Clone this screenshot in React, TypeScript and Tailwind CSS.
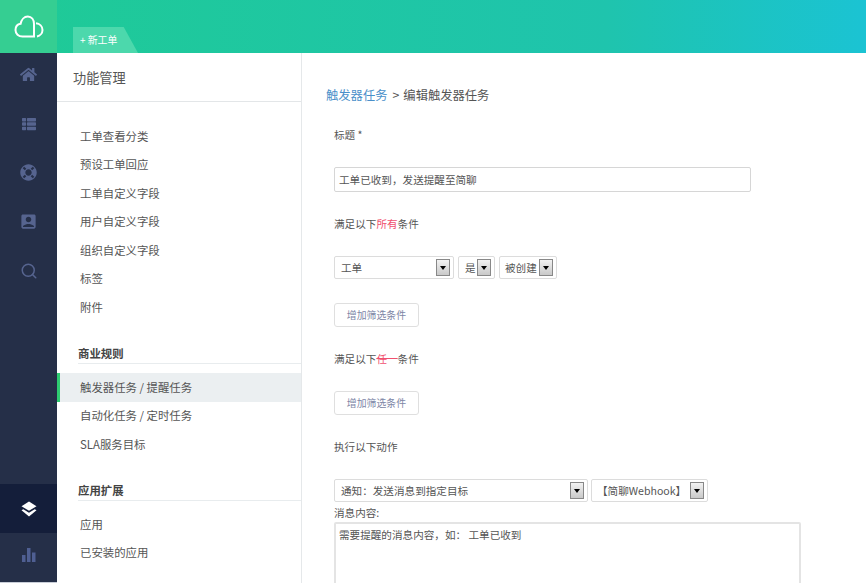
import React from "react";
import { FaHome, FaThList, FaLifeRing } from "react-icons/fa";
import { MdAccountBox } from "react-icons/md";
import { FiSearch } from "react-icons/fi";

const font = { fontFamily: '"Noto Sans CJK SC", "Liberation Sans", sans-serif' };

function Logo() {
  return (
    <svg width="30" height="24" viewBox="0 0 30 24" fill="none" stroke="white" strokeWidth="2">
      <path d="M20 21.5H8.5C4.5 21.5 1.5 18.8 1.5 15C1.5 11.6 3.8 9.3 6.6 8.8C7.4 4.6 10.2 1.5 13.8 1.5C17.6 1.5 20 4.8 20 9V21.5Z" />
      <path d="M22 8.3C25.6 8.6 28.5 11.2 28.5 15C28.5 18.2 26 20.9 23 21.4" />
    </svg>
  );
}

function Layers() {
  return (
    <svg width="16" height="16" viewBox="0 0 16 16" fill="white">
      <path d="M8 0.5L15.5 5.2L8 9.8L0.5 5.2Z" />
      <path d="M2.3 8.2L8 11.7L13.7 8.2L15.5 9.3L8 15.5L0.5 9.3Z" />
    </svg>
  );
}

function Bars() {
  return (
    <svg width="14" height="14" viewBox="0 0 14 14" fill="#4f5f92">
      <rect x="0" y="7" width="3.5" height="7" />
      <rect x="5" y="0" width="3.5" height="14" />
      <rect x="10" y="4.5" width="3.5" height="9.5" />
    </svg>
  );
}

function Rail() {
  const icon = "h-[49px] flex items-center justify-center text-[#56648f]";
  return (
    <div className="w-[57px] shrink-0 bg-[#252f48] flex flex-col border-b border-[#c9ced8]">
      <div className={icon + " -mt-[3px]"}><FaHome size={17} /></div>
      <div className={icon}><FaThList size={14} /></div>
      <div className={icon}><FaLifeRing size={17} /></div>
      <div className={icon}><MdAccountBox size={19} /></div>
      <div className={icon}><FiSearch size={18} /></div>
      <div className="flex-1" />
      <div className="h-[49px] flex items-center justify-center bg-[#141e3a]"><Layers /></div>
      <div className="h-[49px] pb-[5px] flex items-center justify-center"><Bars /></div>
    </div>
  );
}

function NavItem({ label, active }: { label: string; active?: boolean }) {
  return (
    <div
      className={
        "h-[28.5px] flex items-center text-[11.4px] text-[#555] " +
        (active ? "bg-[#ebeff1] border-l-[3px] border-[#2ecc71] pl-[20px]" : "pl-[23px]")
      }
    >
      {label}
    </div>
  );
}

function SectionTitle({ label }: { label: string }) {
  return (
    <div className="ml-[21px] h-[20px] border-b border-[#e8ecee] text-[11.4px] font-bold text-[#444] leading-[19px]">
      {label}
    </div>
  );
}

function Side() {
  return (
    <div className="w-[245px] shrink-0 border-r border-[#e5e8ea] bg-white">
      <div className="h-[49px] border-b border-[#e3e6e8] pl-4 text-[13.2px] text-[#555] leading-[50px]">功能管理</div>
      <div className="pt-[20px]">
        {["工单查看分类", "预设工单回应", "工单自定义字段", "用户自定义字段", "组织自定义字段", "标签", "附件"].map((t) => (
          <NavItem key={t} label={t} />
        ))}
      </div>
      <div className="mt-[22px]"><SectionTitle label="商业规则" /></div>
      <div className="mt-[9.5px]">
        <NavItem label="触发器任务 / 提醒任务" active />
        <NavItem label="自动化任务 / 定时任务" />
        <NavItem label="SLA服务目标" />
      </div>
      <div className="mt-[22px]"><SectionTitle label="应用扩展" /></div>
      <div className="mt-[9.5px]">
        <NavItem label="应用" />
        <NavItem label="已安装的应用" />
      </div>
    </div>
  );
}

function Select({ label, className, gap }: { label: string; className: string; gap?: string }) {
  return (
    <div className={"h-[23px] flex items-center justify-between border border-[#dcdcdc] rounded-[2px] bg-white pr-[3px] text-[10.6px] text-[#555] " + className}>
      <span className={gap ?? "pl-[6px]"}>{label}</span>
      <span className="w-[14px] h-[17px] flex items-center justify-center border border-[#888] bg-gradient-to-b from-[#f2f2f2] to-[#c9c9c9]">
        <span className="w-0 h-0 border-l-[3.5px] border-r-[3.5px] border-t-[4px] border-l-transparent border-r-transparent border-t-black" />
      </span>
    </div>
  );
}

function FilterButton() {
  return (
    <div className="w-[85px] h-[24px] flex items-center justify-center border border-[#dfdfdf] rounded-[3px] bg-white text-[9.9px] text-[#7d86a6]">
      增加筛选条件
    </div>
  );
}

function Main() {
  return (
    <div className="flex-1 min-w-0 bg-white overflow-hidden text-[10.6px] text-[#555]">
      <div className="pl-[24px] pt-[33px] h-[50px] text-[12.3px] leading-[18px]">
        <span className="text-[#4a8fc9]">触发器任务</span>
        <span className="text-[#555] ml-[5px]">&gt;</span>
        <span className="text-[#555] ml-[4px]">编辑触发器任务</span>
      </div>
      <div className="pl-[32px]">
        <div className="mt-[24px] h-[16px] leading-[16px]">标题 *</div>
        <div className="mt-[24px] w-[417px] h-[25px] border border-[#d6d6d6] rounded-[2px] pl-[4px] flex items-center">
          工单已收到，发送提醒至简聊
        </div>
        <div className="mt-[24px] h-[16px] leading-[16px]">
          满足以下<span className="text-[#f0506e]">所有</span>条件
        </div>
        <div className="mt-[24px] flex gap-[4px]">
          <Select label="工单" className="w-[120px]" />
          <Select label="是" className="w-[37px]" />
          <Select label="被创建" className="w-[58px]" gap="pl-[5px]" />
        </div>
        <div className="mt-[24px]"><FilterButton /></div>
        <div className="mt-[24px] h-[16px] leading-[16px]">
          满足以下<span className="text-[#f0506e] line-through">任一</span>条件
        </div>
        <div className="mt-[24px]"><FilterButton /></div>
        <div className="mt-[24px] h-[16px] leading-[16px]">执行以下动作</div>
        <div className="mt-[24px] flex gap-[3px]">
          <Select label="通知：发送消息到指定目标" className="w-[254px]" />
          <Select label="【简聊Webhook】" className="w-[117px]" gap="pl-[5px]" />
        </div>
        <div className="mt-[3px] h-[17px] leading-[16px]">消息内容:</div>
        <div className="w-[467px] h-[120px] border-2 border-[#e4e4e4] rounded-[2px] pl-[3px] pt-[3px] leading-[16px]">
          需要提醒的消息内容，如： 工单已收到
        </div>
      </div>
    </div>
  );
}

export default function App() {
  return (
    <div className="w-[866px] h-[583px] overflow-hidden flex flex-col bg-white" style={font}>
      <div className="h-[53px] shrink-0 flex bg-gradient-to-r from-[#1fca96] via-[#1fc4ad] via-70% to-[#1bc3d3]">
        <div className="w-[57px] bg-[#35ce92] flex items-center justify-center"><Logo /></div>
        <div className="ml-4 mt-[27px] w-[65px] h-[26px] bg-[#4cd8ac] [clip-path:polygon(0_0,78%_0,100%_100%,0_100%)] pl-[7px] text-[9.9px] leading-[26px] text-white">
          + 新工单
        </div>
      </div>
      <div className="flex-1 flex min-h-0">
        <Rail />
        <Side />
        <Main />
      </div>
    </div>
  );
}
